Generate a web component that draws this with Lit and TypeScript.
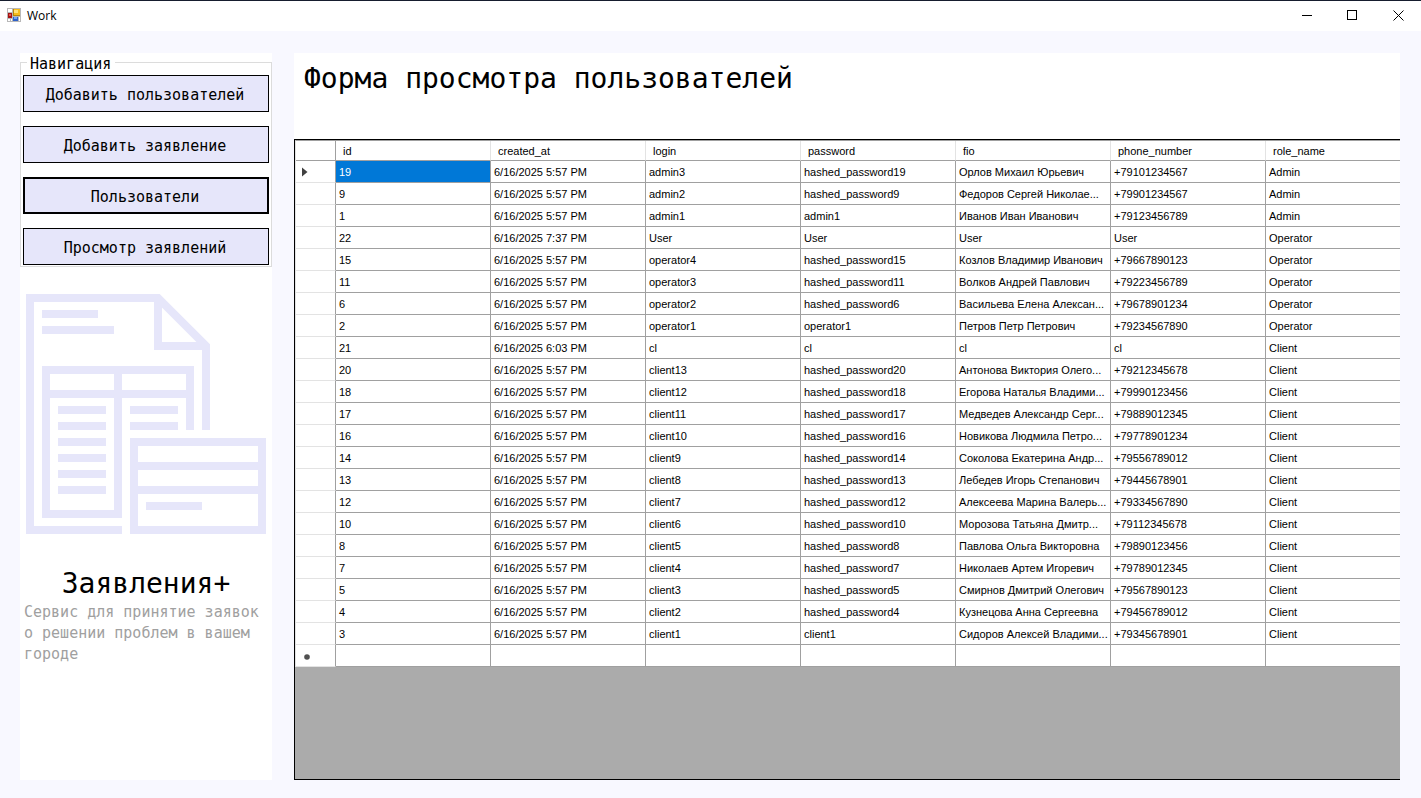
import { LitElement, html, css, svg } from "lit";
import { customElement, state } from "lit/decorators.js";
import { classMap } from "lit/directives/class-map.js";

type User = [string, string, string, string, string, string, string];

const COLUMNS = ["id", "created_at", "login", "password", "fio", "phone_number", "role_name"];
const CREATED = "6/16/2025 5:57 PM";

const USERS: User[] = [
  ["19", CREATED, "admin3", "hashed_password19", "Орлов Михаил Юрьевич", "+79101234567", "Admin"],
  ["9", CREATED, "admin2", "hashed_password9", "Федоров Сергей Николае...", "+79901234567", "Admin"],
  ["1", CREATED, "admin1", "admin1", "Иванов Иван Иванович", "+79123456789", "Admin"],
  ["22", "6/16/2025 7:37 PM", "User", "User", "User", "User", "Operator"],
  ["15", CREATED, "operator4", "hashed_password15", "Козлов Владимир Иванович", "+79667890123", "Operator"],
  ["11", CREATED, "operator3", "hashed_password11", "Волков Андрей Павлович", "+79223456789", "Operator"],
  ["6", CREATED, "operator2", "hashed_password6", "Васильева Елена Алексан...", "+79678901234", "Operator"],
  ["2", CREATED, "operator1", "operator1", "Петров Петр Петрович", "+79234567890", "Operator"],
  ["21", "6/16/2025 6:03 PM", "cl", "cl", "cl", "cl", "Client"],
  ["20", CREATED, "client13", "hashed_password20", "Антонова Виктория Олего...", "+79212345678", "Client"],
  ["18", CREATED, "client12", "hashed_password18", "Егорова Наталья Владими...", "+79990123456", "Client"],
  ["17", CREATED, "client11", "hashed_password17", "Медведев Александр Серг...", "+79889012345", "Client"],
  ["16", CREATED, "client10", "hashed_password16", "Новикова Людмила Петро...", "+79778901234", "Client"],
  ["14", CREATED, "client9", "hashed_password14", "Соколова Екатерина Андр...", "+79556789012", "Client"],
  ["13", CREATED, "client8", "hashed_password13", "Лебедев Игорь Степанович", "+79445678901", "Client"],
  ["12", CREATED, "client7", "hashed_password12", "Алексеева Марина Валерь...", "+79334567890", "Client"],
  ["10", CREATED, "client6", "hashed_password10", "Морозова Татьяна Дмитр...", "+79112345678", "Client"],
  ["8", CREATED, "client5", "hashed_password8", "Павлова Ольга Викторовна", "+79890123456", "Client"],
  ["7", CREATED, "client4", "hashed_password7", "Николаев Артем Игоревич", "+79789012345", "Client"],
  ["5", CREATED, "client3", "hashed_password5", "Смирнов Дмитрий Олегович", "+79567890123", "Client"],
  ["4", CREATED, "client2", "hashed_password4", "Кузнецова Анна Сергеевна", "+79456789012", "Client"],
  ["3", CREATED, "client1", "client1", "Сидоров Алексей Владими...", "+79345678901", "Client"],
];

@customElement("title-bar")
export class TitleBar extends LitElement {
  static styles = css`
    :host {
      display: flex;
      align-items: center;
      height: 28px;
      padding-bottom: 2px;
      border-top: 1px solid #161d2e;
      background: #fff;
      font: 12px/16px "Open Sans", sans-serif;
      color: #000;
    }
    .icon {
      margin: 0 6px 0 7px;
    }
    .name {
      flex: 1;
      padding-top: 2px;
    }
    .control {
      display: flex;
      align-items: center;
      justify-content: center;
      width: 46px;
      height: 28px;
      padding: 0;
      border: 0;
      background: none;
    }
  `;

  render() {
    return html`
      <svg class="icon" width="14" height="14" viewBox="0 0 14 14" shape-rendering="crispEdges" aria-hidden="true">
        <path fill="#b8b8b8" d="M0 0h14v14H0z" />
        <path fill="#fff" d="M1 1h4v3H1zM1 11h2v2H1zM4 11h1v2H4zM12 9h1v4h-1z" />
        <path fill="#a51313" d="M1 5h4v5H1z" />
        <path fill="#e2574c" d="M2 6h2v2H2z" />
        <path fill="#b8860b" d="M6 1h7v7H6z" />
        <path fill="#f7bd1c" d="M7 1h6v6H7z" />
        <path fill="#ffe27a" d="M7 2h4v3H7z" />
        <path fill="#2e62c9" d="M6 9h5v4H6z" />
        <path fill="#72a5f5" d="M7 9h3v2H7z" />
      </svg>
      <span class="name">Work</span>
      <button class="control" aria-label="Minimize">
        <svg width="12" height="12" shape-rendering="crispEdges"><path fill="#000" d="M2 6h10v1H2z" /></svg>
      </button>
      <button class="control" aria-label="Maximize">
        <svg width="12" height="12" shape-rendering="crispEdges">
          <path fill="none" stroke="#000" d="M1.5 1.5h9v9h-9z" />
        </svg>
      </button>
      <button class="control" aria-label="Close">
        <svg width="12" height="12"><path fill="none" stroke="#000" d="M1.5 1.5l10 10M11.5 1.5l-10 10" /></svg>
      </button>
    `;
  }
}

@customElement("side-panel")
export class SidePanel extends LitElement {
  @state() private active = 2;

  private items = ["Добавить пользователей", "Добавить заявление", "Пользователи", "Просмотр заявлений"];

  static styles = css`
    :host {
      display: block;
      background: #fff;
      font: 15px/21px "DejaVu Sans Mono", monospace;
      color: #000;
    }
    .nav {
      display: flex;
      flex-direction: column;
      gap: 14px;
      margin: 0;
      min-width: 0;
      padding: 3px 2px 1px;
      border: 1px solid #dcdcdc;
    }
    .legend {
      margin-left: 4px;
      padding: 3px 4px 0 3px;
      line-height: 16px;
    }
    .item {
      height: 37px;
      padding: 4px 2px 0 0;
      border: 1px solid #000;
      background: #e6e6fa;
      color: inherit;
      font: inherit;
    }
    .item.active {
      border-width: 2px;
    }
    .art {
      display: block;
      margin: 27px auto 0;
    }
    .brand {
      margin: 32px 0 0;
      font-size: 28px;
      line-height: 36px;
      font-weight: 400;
      text-align: center;
    }
    .note {
      margin: 0;
      padding: 0 4px;
      color: #a0a0a0;
    }
  `;

  private art() {
    const lines = [0, 1, 2, 3, 4, 5].map((i) => svg`<path d="M32 ${116 + i * 16}h48" />`);
    return html`
      <svg class="art" width="240" height="240" viewBox="0 0 240 240" fill="none" stroke="#e6e6fa" stroke-width="8" aria-hidden="true">
        <path d="M96 236H4V4h128l48 48v84M132 4v48h48" />
        <path d="M16 20h56M16 36h72" />
        <path d="M164 136V76H20v144h72V76M20 100h144" />
        ${lines}
        <path d="M104 116h48M104 132h48" />
        <path d="M108 148h128v88H108zM108 172h128M108 196h128M120 212h56" />
      </svg>
    `;
  }

  render() {
    return html`
      <fieldset class="nav">
        <legend class="legend">Навигация</legend>
        ${this.items.map(
          (label, i) => html`<button
            class=${classMap({ item: true, active: i === this.active })}
            @click=${() => (this.active = i)}
          >${label}</button>`,
        )}
      </fieldset>
      ${this.art()}
      <h2 class="brand">Заявления+</h2>
      <p class="note">Сервис для принятие заявок о решении проблем в вашем городе</p>
    `;
  }
}

@customElement("user-grid")
export class UserGrid extends LitElement {
  static styles = css`
    :host {
      display: block;
      overflow: hidden;
      border: 1px solid #000;
      border-right: 0;
      background: #ababab;
      font: 11px/16px "Liberation Sans", Arial, sans-serif;
      color: #000;
    }
    .grid {
      width: 1126px;
      table-layout: fixed;
      border-collapse: separate;
      border-spacing: 0;
      border-top: 1px solid #a0a0a0;
      border-left: 1px solid #e3e3e3;
    }
    .marker-col {
      width: 40px;
    }
    .head,
    .cell,
    .marker {
      box-sizing: border-box;
      height: 22px;
      border-right: 1px solid #a0a0a0;
      border-bottom: 1px solid #a0a0a0;
      background: #fff;
      font-weight: 400;
      text-align: left;
      white-space: nowrap;
      overflow: hidden;
    }
    .head {
      height: 20px;
      padding: 0 7px;
      border-right-color: #e3e3e3;
    }
    .corner {
      border-right-color: #a0a0a0;
    }
    .cell {
      padding: 0 3px;
    }
    .marker {
      padding: 0 6px;
      border-bottom-color: #e3e3e3;
    }
    .glyph {
      display: block;
    }
    .cell.selected {
      background: #0078d7;
      color: #fff;
    }
  `;

  render() {
    return html`
      <table class="grid">
        <colgroup>
          <col class="marker-col" />
          ${COLUMNS.map(() => html`<col />`)}
        </colgroup>
        <thead>
          <tr>
            <td class="head corner"></td>
            ${COLUMNS.map((c) => html`<th class="head" scope="col">${c}</th>`)}
          </tr>
        </thead>
        <tbody>
          ${USERS.map(
            (user, r) => html`<tr>
              <td class="marker">
                ${r === 0
                  ? html`<svg class="glyph" width="8" height="10" aria-hidden="true"><path fill="#404040" d="M0 0.5l5.5 4.5-5.5 4.5z" /></svg>`
                  : ""}
              </td>
              ${user.map(
                (value, c) => html`<td class=${classMap({ cell: true, selected: r === 0 && c === 0 })}>${value}</td>`,
              )}
            </tr>`,
          )}
          <tr>
            <td class="marker">
              <svg class="glyph" width="8" height="8" aria-hidden="true">
                <circle cx="5" cy="5" r="2.8" fill="#505050" />
              </svg>
            </td>
            ${COLUMNS.map(() => html`<td class="cell"></td>`)}
          </tr>
        </tbody>
      </table>
    `;
  }
}

@customElement("app-root")
export class AppRoot extends LitElement {
  static styles = css`
    :host {
      display: flex;
      flex-direction: column;
      min-height: 100vh;
      background: #f8f8ff;
    }
    .body {
      flex: 1;
      display: grid;
      grid-template-columns: 252px minmax(0, 1fr);
      gap: 22px;
      padding: 22px 21px 18px 20px;
    }
    .content {
      display: flex;
      flex-direction: column;
      background: #fff;
    }
    .title {
      margin: 0;
      padding: 8px 10px 42px;
      font: 400 28px/36px "DejaVu Sans Mono", monospace;
      color: #000;
    }
    .users {
      flex: 1;
    }
  `;

  render() {
    return html`
      <title-bar></title-bar>
      <div class="body">
        <side-panel></side-panel>
        <main class="content">
          <h1 class="title">Форма просмотра пользователей</h1>
          <user-grid class="users"></user-grid>
        </main>
      </div>
    `;
  }
}
